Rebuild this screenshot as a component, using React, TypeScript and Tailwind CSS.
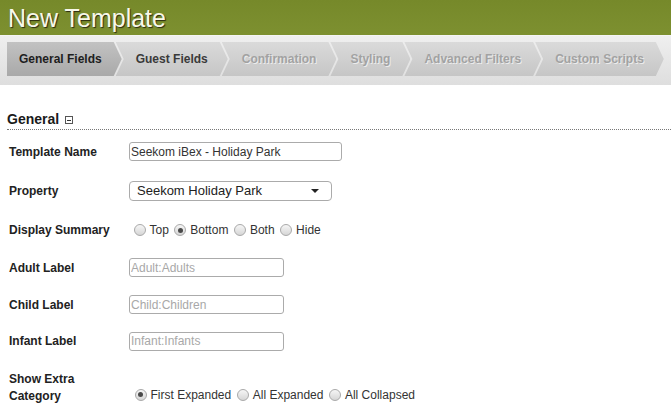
import React from 'react'

const TABS = [
  { label: 'General Fields', state: 'active' },
  { label: 'Guest Fields', state: 'enabled' },
  { label: 'Confirmation', state: 'disabled' },
  { label: 'Styling', state: 'disabled' },
  { label: 'Advanced Filters', state: 'disabled' },
  { label: 'Custom Scripts', state: 'disabled' },
]

function Tab({ label, state, first }: { label: string; state: string; first: boolean }) {
  const shape = first
    ? '[clip-path:polygon(0_0,calc(100%_-_8px)_0,100%_50%,calc(100%_-_8px)_100%,0_100%)] pl-[12px] pr-[20px]'
    : '[clip-path:polygon(0_0,calc(100%_-_8px)_0,100%_50%,calc(100%_-_8px)_100%,0_100%,8px_50%)] pl-[20px] pr-[20px] ml-[-6px]'
  const look =
    state === 'active'
      ? 'bg-gradient-to-b from-[#c2c2c2] to-[#a9a9a9] text-[#1e1e1e]'
      : state === 'enabled'
        ? 'bg-gradient-to-b from-[#dadada] to-[#c6c6c6] text-[#3a3a3a]'
        : 'bg-gradient-to-b from-[#dadada] to-[#c6c6c6] text-[#a2a2a2] [text-shadow:1px_1px_0_#ececec]'
  return (
    <div className={`h-[34px] flex items-center text-[12px] font-bold whitespace-nowrap ${shape} ${look}`}>
      {label}
    </div>
  )
}

function Radio({ checked }: { checked?: boolean }) {
  return (
    <span className="ml-[5.5px] w-[12px] h-[12px] rounded-full border border-[#a9a9a9] bg-gradient-to-b from-[#f6f6f6] to-[#d6d6d6] flex items-center justify-center shrink-0">
      {checked && <span className="w-[5px] h-[5px] rounded-full bg-[#4a4a4a]" />}
    </span>
  )
}

function RadioGroup({ options, selected, className = '' }: { options: string[]; selected: number; className?: string }) {
  return (
    <div className={`flex items-center h-[17px] text-[12px] text-[#333] ${className}`}>
      {options.map((o, i) => (
        <React.Fragment key={o}>
          <Radio checked={i === selected} />
          <span className="ml-[4px]">{o}</span>
        </React.Fragment>
      ))}
    </div>
  )
}

function Row({ label, h, children }: { label: string; h: string; children: React.ReactNode }) {
  return (
    <div className={`flex items-center ${h}`}>
      <div className="w-[129px] pl-[9px] text-[12px] font-bold text-[#222] shrink-0">{label}</div>
      {children}
    </div>
  )
}

const inputCls =
  'h-[19px] border border-[#ababab] rounded-[3px] px-[1px] text-[12px] text-[#333] placeholder:text-[#a8a8a8] outline-none bg-white'

export default function App() {
  return (
    <div className="w-[671px] h-[412px] overflow-hidden bg-white font-['Liberation_Sans',Arial,sans-serif]">
      {/* Header */}
      <div className="h-[35px] bg-gradient-to-b from-[#76892a] to-[#7d9030] pl-[8px] flex items-center">
        <h1 className="text-[25px] leading-none text-[#f8f8ea] [text-shadow:1px_1px_1px_#2b2b10] mt-[1px]">New Template</h1>
      </div>

      {/* Tabs */}
      <div className="h-[50px] bg-gradient-to-b from-[#efefef] to-[#dedede] border-t border-[#f4f4f4] pt-[6px] px-[7px]">
        <div className="flex">
          {TABS.map((t, i) => (
            <Tab key={t.label} label={t.label} state={t.state} first={i === 0} />
          ))}
        </div>
      </div>

      {/* General section */}
      <div className="pt-[25px]">
        <div className="ml-[7px] h-[20px] border-b border-dotted border-[#777] flex items-start">
          <span className="text-[14px] leading-[18px] font-bold text-[#1a1a1a]">General</span>
          <span className="ml-[6px] mt-[6px] w-[8px] h-[8px] border border-[#555] flex items-center justify-center">
            <span className="w-[4px] h-[1px] bg-[#333]" />
          </span>
        </div>

        <div className="mt-[3px]">
          <Row label="Template Name" h="h-[37px]">
            <input className={`${inputCls} w-[213px]`} defaultValue="Seekom iBex - Holiday Park" />
          </Row>
          <Row label="Property" h="h-[41px]">
            <div className="h-[20px] w-[203px] border border-[#ababab] rounded-[4px] pl-[7px] pr-[12px] flex items-center justify-between text-[13px] text-[#222] bg-white">
              <span>Seekom Holiday Park</span>
              <svg width="8" height="4" viewBox="0 0 8 4">
                <path d="M0 0 L8 0 L4 4 Z" fill="#222" />
              </svg>
            </div>
          </Row>
          <Row label="Display Summary" h="h-[38px]">
            <RadioGroup options={['Top', 'Bottom', 'Both', 'Hide']} selected={1} className="-ml-[1px]" />
          </Row>
          <Row label="Adult Label" h="h-[37px]">
            <input className={`${inputCls} w-[155px]`} placeholder="Adult:Adults" />
          </Row>
          <Row label="Child Label" h="h-[37px]">
            <input className={`${inputCls} w-[155px]`} placeholder="Child:Children" />
          </Row>
          <Row label="Infant Label" h="h-[36px]">
            <input className={`${inputCls} w-[155px]`} placeholder="Infant:Infants" />
          </Row>
          <div className="flex items-end mt-[12px]">
            <div className="w-[129px] pl-[9px] pr-[50px] text-[12px] leading-[17px] font-bold text-[#222] shrink-0">
              Show Extra Category
            </div>
            <RadioGroup options={['First Expanded', 'All Expanded', 'All Collapsed']} selected={0} className="mb-[2px]" />
          </div>
        </div>
      </div>
    </div>
  )
}
